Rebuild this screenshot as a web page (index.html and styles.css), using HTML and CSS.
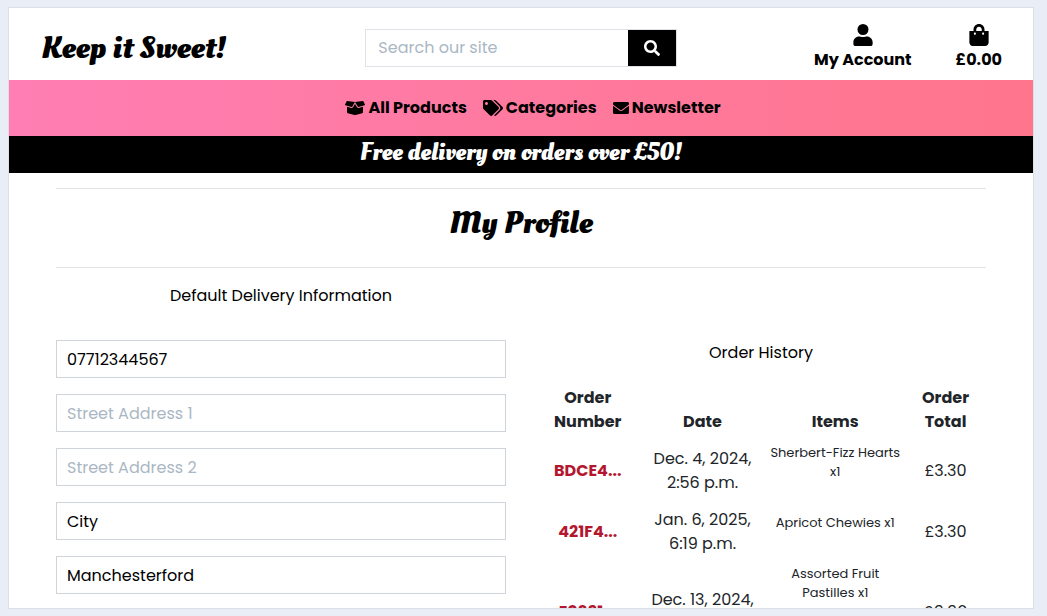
FILE: index.html
```html
<!DOCTYPE html>
<html lang="en">
<head>
<meta charset="utf-8">
<meta name="viewport" content="width=device-width, initial-scale=1">
<title>Keep it Sweet!</title>
<link rel="stylesheet" href="styles.css">
</head>
<body>
<div class="frame">
  <header class="header">
    <a class="logo" href="#">Keep it Sweet!</a>
    <form class="search" role="search">
      <input class="search-input" type="text" placeholder="Search our site" aria-label="Search our site">
      <button class="search-button" type="button" aria-label="Search">
        <svg viewBox="0 0 512 512" width="16" height="16" fill="currentColor" aria-hidden="true"><path d="M505 442.700 405.300 343c-4.500-4.500-10.600-7-17-7H372c27.600-35.300 44-79.700 44-128C416 93.100 322.900 0 208 0S0 93.100 0 208s93.100 208 208 208c48.300 0 92.700-16.400 128-44v16.300c0 6.400 2.500 12.500 7 17l99.700 99.700c9.400 9.400 24.600 9.400 33.900 0l28.300-28.300c9.400-9.400 9.400-24.600.1-34zM208 336c-70.700 0-128-57.200-128-128 0-70.700 57.200-128 128-128 70.700 0 128 57.200 128 128 0 70.700-57.200 128-128 128z"/></svg>
      </button>
    </form>
    <nav class="account" aria-label="Account">
      <a class="account-link" href="#">
        <svg viewBox="0 0 448 512" width="20" height="22" fill="currentColor" aria-hidden="true"><circle cx="224" cy="128" r="128"/><path d="M313.600 288c-28.700 0-42.500 16-89.600 16s-60.800-16-89.600-16C60.200 288 0 348.200 0 422.400V464c0 26.500 21.500 48 48 48h352c26.500 0 48-21.500 48-48v-41.600c0-74.200-60.200-134.400-134.400-134.400z"/></svg>
        <span>My Account</span>
      </a>
      <a class="account-link" href="#">
        <svg viewBox="0 0 448 512" width="20" height="22" fill="currentColor" aria-hidden="true"><path d="M352 160v-32C352 57.420 294.579 0 224 0 153.420 0 96 57.420 96 128v32H0v272c0 44.183 35.817 80 80 80h288c44.183 0 80-35.817 80-80V160h-96zm-192-32c0-35.290 28.710-64 64-64s64 28.710 64 64v32H160v-32zm160 120c-13.255 0-24-10.745-24-24s10.745-24 24-24 24 10.745 24 24-10.745 24-24 24zm-192 0c-13.255 0-24-10.745-24-24s10.745-24 24-24 24 10.745 24 24-10.745 24-24 24z"/></svg>
        <span>£0.00</span>
      </a>
    </nav>
  </header>

  <nav class="menu" aria-label="Main">
    <a class="menu-link" href="#">
      <svg viewBox="0 0 640 512" width="20" height="16" fill="currentColor" aria-hidden="true"><path d="M425.700 256c-16.900 0-32.800-9-41.400-23.400L320 126l-64.200 106.600c-8.700 14.500-24.600 23.500-41.500 23.500-4.500 0-9-.6-13.300-1.900L64 215v178c0 14.700 10 27.500 24.200 31l216.200 54.100c10.200 2.500 20.900 2.500 31 0L551.800 424c14.200-3.600 24.200-16.400 24.200-31V215l-137 39.100c-4.300 1.300-8.800 1.900-13.300 1.900zm212.600-112.200L586.800 41c-3.100-6.200-9.800-9.800-16.700-8.900L320 64l91.700 152.100c3.800 6.300 11.400 9.300 18.500 7.300l197.900-56.500c9.900-2.900 14.700-13.900 10.200-23.100zM53.200 41 1.700 143.800c-4.600 9.200.3 20.200 10.100 23l197.900 56.500c7.100 2 14.700-1 18.500-7.300L320 64 69.800 32.100c-6.900-.8-13.500 2.700-16.600 8.900z"/></svg>
      All Products
    </a>
    <a class="menu-link" href="#">
      <svg viewBox="0 0 640 512" width="20" height="16" fill="currentColor" aria-hidden="true"><path d="M497.941 225.941 286.059 14.059A48 48 0 0 0 252.118 0H48C21.490 0 0 21.490 0 48v204.118a48 48 0 0 0 14.059 33.941l211.882 211.882c18.744 18.745 49.136 18.746 67.882 0l204.118-204.118c18.745-18.745 18.745-49.137 0-67.882zM112 160c-26.510 0-48-21.490-48-48s21.490-48 48-48 48 21.490 48 48-21.490 48-48 48zm513.941 133.823L421.823 497.941c-18.745 18.745-49.137 18.745-67.882 0l-.36-.36L527.640 323.522c16.999-16.999 26.360-39.600 26.360-63.640s-9.362-46.641-26.360-63.640L331.397 0h48.721a48 48 0 0 1 33.941 14.059l211.882 211.882c18.745 18.745 18.745 49.137 0 67.882z"/></svg>
      Categories
    </a>
    <a class="menu-link" href="#">
      <svg viewBox="0 0 512 512" width="16" height="16" fill="currentColor" aria-hidden="true"><path d="M502.300 190.800c3.900-3.100 9.700-.2 9.700 4.700V400c0 26.500-21.500 48-48 48H48c-26.500 0-48-21.500-48-48V195.600c0-5 5.700-7.800 9.700-4.700 22.400 17.400 52.100 39.500 154.100 113.600 21.100 15.400 56.700 47.800 92.200 47.600 35.700.3 72-32.800 92.300-47.600 102-74.100 131.600-96.300 154-113.700zM256 320c23.200.4 56.600-29.200 73.400-41.400 132.700-96.300 142.800-104.700 173.400-128.700 5.800-4.500 9.200-11.500 9.200-18.900v-19c0-26.500-21.500-48-48-48H48c-26.500 0-48 21.500-48 48v19c0 7.400 3.400 14.300 9.200 18.900 30.600 23.900 40.700 32.400 173.400 128.700 16.800 12.200 50.200 41.800 73.400 41.400z"/></svg>
      Newsletter
    </a>
  </nav>

  <p class="banner">Free delivery on orders over £50!</p>

  <main class="content">
    <h1 class="title">My Profile</h1>
    <div class="columns">
      <section>
        <h2 class="subtitle">Default Delivery Information</h2>
        <form class="fields">
          <input class="field" type="text" value="07712344567" placeholder="Phone Number" aria-label="Phone Number">
          <input class="field" type="text" placeholder="Street Address 1" aria-label="Street Address 1">
          <input class="field" type="text" placeholder="Street Address 2" aria-label="Street Address 2">
          <input class="field" type="text" value="City" placeholder="Town or City" aria-label="Town or City">
          <input class="field" type="text" value="Manchesterford" placeholder="County" aria-label="County">
        </form>
      </section>
      <section class="history">
        <h2 class="subtitle">Order History</h2>
        <table class="orders">
          <colgroup><col class="col-number"><col class="col-date"><col class="col-items"><col class="col-total"></colgroup>
          <thead>
            <tr><th>Order Number</th><th>Date</th><th>Items</th><th>Order Total</th></tr>
          </thead>
          <tbody>
            <tr>
              <td><a class="order-link" href="#">BDCE4...</a></td>
              <td>Dec. 4, 2024,<br>2:56 p.m.</td>
              <td><ul class="items"><li>Sherbert-Fizz Hearts<br>x1</li></ul></td>
              <td>£3.30</td>
            </tr>
            <tr>
              <td><a class="order-link" href="#">421F4...</a></td>
              <td>Jan. 6, 2025,<br>6:19 p.m.</td>
              <td><ul class="items"><li>Apricot Chewies x1</li></ul></td>
              <td>£3.30</td>
            </tr>
            <tr>
              <td><a class="order-link" href="#">E0391...</a></td>
              <td>Dec. 13, 2024,<br>2:30 p.m.</td>
              <td><ul class="items"><li>Assorted Fruit<br>Pastilles x1</li><li>Cinder Toffee<br>x1</li></ul></td>
              <td>£9.90</td>
            </tr>
          </tbody>
        </table>
      </section>
    </div>
  </main>
</div>
</body>
</html>
```
FILE: styles.css
```css
*, *::before, *::after { box-sizing: border-box; }

body {
  margin: 0;
  padding: 7px 13px 7px 8px;
  background: #e9eef6;
  color: #000;
  font: 16px/24px Poppins, Inter, "Open Sans", sans-serif;
}

a { color: inherit; text-decoration: none; }
svg { display: block; flex: none; }
input, button { font: inherit; border-radius: 0; }

.frame {
  height: calc(100vh - 14px);
  overflow: hidden;
  border: 1px solid #dcdfe4;
  background: #fff;
}

.header {
  display: grid;
  grid-template-columns: repeat(3, minmax(0, 1fr));
  align-items: center;
  height: 72px;
  padding-top: 7px;
}

.logo, .banner, .title {
  font-family: "Oleo Script", "Liberation Serif", serif;
  font-weight: 700;
}

.logo { padding-left: 32px; font-size: 32px; line-height: 40px; white-space: nowrap; }

.search { display: flex; margin: 0 15px; height: 38px; border: 1px solid #dee2e6; }
.search-input { flex: 1; min-width: 0; padding: 0 12px; border: 0; background: #fff; }
.search-button {
  display: grid;
  place-items: center;
  width: 48px;
  padding: 0;
  border: 0;
  background: #000;
  color: #fff;
}
::placeholder { color: #aab7c4; opacity: 1; }

.account { display: flex; justify-content: flex-end; gap: 44px; padding-right: 31px; font-weight: 700; }
.account-link { display: flex; flex-direction: column; align-items: center; gap: 2px; white-space: nowrap; }

.menu {
  display: flex;
  justify-content: center;
  align-items: center;
  gap: 16px;
  height: 56px;
  padding-left: 24px;
  background: linear-gradient(90deg, #ff7eb3, #ff758c);
  font-weight: 700;
}
.menu-link { display: flex; align-items: center; gap: 3px; white-space: nowrap; }

.banner {
  margin: 0;
  padding: 1px 0 4px;
  background: #000;
  color: #fff;
  font-size: 24px;
  line-height: 32px;
  text-align: center;
}

.content { padding: 15px 47px 0; }
.title {
  margin: 0 0 16px;
  padding: 14px 0 24px;
  border: solid #e3e3e5;
  border-width: 1px 0;
  font-size: 32px;
  line-height: 40px;
  text-align: center;
}

.columns { display: grid; grid-template-columns: 1fr 1fr; gap: 30px; }
.subtitle { margin: 0; font-size: 16px; font-weight: 400; text-align: center; }

.fields { display: grid; gap: 16px; padding-top: 32px; }
.field { width: 100%; height: 38px; padding: 0 10px; border: 1px solid #ced4da; background: #fff; color: #000; }

.history { padding-top: 57px; }
.orders {
  width: 100%;
  margin-top: 16px;
  border-collapse: collapse;
  table-layout: fixed;
  color: #212529;
  text-align: center;
}
.col-number { width: 23%; }
.col-date { width: 28%; }
.col-items { width: 31%; }
.col-total { width: 18%; }
th { padding: 5px 12px 6px; vertical-align: bottom; font-weight: 700; }
td { height: 61px; padding: 2px 0; vertical-align: middle; }
.order-link { color: #b3172f; font-weight: 700; }
.items { margin: 0 0 18px; padding: 0; list-style: none; font-size: 13px; line-height: 19px; }
.items li + li { padding-top: 1px; }
```
